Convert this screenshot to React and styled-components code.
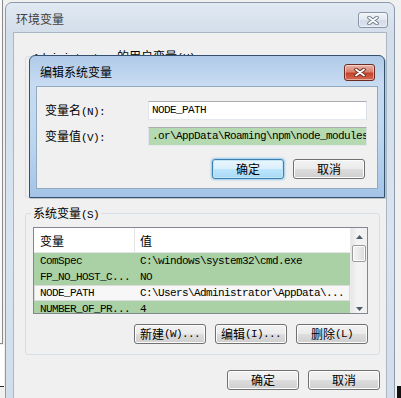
import React from "react"
import styled, { createGlobalStyle } from "styled-components"

const GlobalStyle = createGlobalStyle`
  html, body { margin: 0; padding: 0; }
  body { background: #f0f0f0; overflow: hidden; }
  * { box-sizing: border-box; }
`

const Desktop = styled.div`
  position: relative;
  width: 401px;
  height: 398px;
  overflow: hidden;
  background: #f0f0f0;
  font-family: "Liberation Mono", "DejaVu Sans Mono", monospace;
  font-size: 11px;
  letter-spacing: -0.6px;
  color: #000;
`

// bits of other windows peeking out behind the dialogs
const BackPane = styled.div`
  position: absolute;
  left: -30px;
  top: -10px;
  width: 33px;
  height: 354px;
  background: #fafafa;
  border: 1px solid #8a8a8a;
`

const BackPaneLow = styled.div`
  position: absolute;
  left: -30px;
  top: 345px;
  width: 34px;
  height: 42px;
  background: #fff;
  border-bottom: 1px solid #2a2a2a;
`

const DarkCorner = styled.div`
  position: absolute;
  left: 397px;
  top: 386px;
  width: 4px;
  height: 12px;
  background: #111;
`

const Han = styled.span`
  font-family: "Noto Sans CJK SC", sans-serif;
  font-size: 12px;
  letter-spacing: 0;
`

const OuterWindow = styled.div`
  position: absolute;
  left: 5px;
  top: 2px;
  width: 390px;
  height: 430px;
  border: 1px solid #8c9aab;
  border-radius: 7px 7px 0 0;
  background: linear-gradient(#e1e9f2, #d3deeb 30px, #d9e4f0 55%, #cfdcea);
  padding: 0 7px;
  display: flex;
  flex-direction: column;
`

const EditDialog = styled.div`
  position: absolute;
  left: 29px;
  top: 55px;
  width: 356px;
  height: 143px;
  border: 1px solid #34506f;
  border-radius: 6px 6px 0 0;
  background: linear-gradient(#afcae8, #c7dbf1 28px, #bcd6f0 60%, #a4c4e7);
  padding: 0 6px 8px;
  display: flex;
  flex-direction: column;
  box-shadow: 1px 1px 0 rgba(40, 60, 90, 0.25);
`

const TitleBar = styled.div`
  height: ${p => p.$h}px;
  flex: none;
  display: flex;
  justify-content: space-between;
  align-items: flex-start;
  padding-left: ${p => p.$indent}px;
`

const Caption = styled.div`
  margin-top: 8px;
  font-family: "Noto Sans CJK SC", sans-serif;
  font-size: 12px;
  line-height: 16px;
  letter-spacing: 0;
  color: ${p => (p.$dim ? "#404040" : "#000")};
`

const CloseButton = styled.div`
  width: ${p => p.$w}px;
  height: ${p => p.$hh}px;
  margin-top: ${p => p.$top}px;
  margin-right: ${p => p.$right}px;
  border: 1px solid ${p => (p.$active ? "#6e2b22" : "#8795a6")};
  border-radius: 3px;
  background: ${p =>
    p.$active
      ? "linear-gradient(#eab3a5, #d9826f 45%, #c3432c 55%, #d76a52)"
      : "linear-gradient(#f1f4f8, #e2e8f0 50%, #d3dce7 51%, #dde4ee)"};
  box-shadow: inset 0 0 0 1px rgba(255, 255, 255, 0.45);
  display: flex;
  align-items: center;
  justify-content: center;
`

const CloseGlyph = ({ active }) => (
  <svg width="12" height="9" viewBox="0 0 12 9">
    <path
      d="M2 1.5 L10 7.5 M10 1.5 L2 7.5"
      stroke={active ? "#6a2a20" : "#6d7a8a"}
      strokeWidth="3.6"
      strokeLinecap="round"
    />
    <path
      d="M2 1.5 L10 7.5 M10 1.5 L2 7.5"
      stroke="#fff"
      strokeWidth="1.8"
      strokeLinecap="round"
    />
  </svg>
)

const Client = styled.div`
  flex: 1;
  background: #f0f0f0;
  border: 1px solid ${p => (p.$active ? "#92a9c2" : "#a9b6c4")};
  display: flex;
  flex-direction: column;
`

const Group = styled.fieldset`
  margin: ${p => p.$top}px 6px 0 11px;
  padding: 7px 11px 10px 7px;
  border: 1px solid #d5dfe5;
  border-radius: 3px;
  min-width: 0;
`

const Legend = styled.legend`
  padding: 0 2px;
  margin-left: -2px;
  line-height: 14px;
  height: 14px;
`

// the user list sits under the edit dialog, only its frame shows
const HiddenBody = styled.div`
  height: 117px;
`

const ListView = styled.div`
  display: grid;
  grid-template-columns: 1fr 17px;
  height: 87px;
  border: 1px solid #828790;
  background: #fff;
  overflow: hidden;
`

const ListBody = styled.div`
  min-width: 0;
  display: flex;
  flex-direction: column;
`

const HeaderRow = styled.div`
  display: grid;
  grid-template-columns: 100px 1fr;
  height: 25px;
  flex: none;
  border-bottom: 1px solid #e5e5e5;
`

const HeaderCell = styled.div`
  display: flex;
  align-items: center;
  padding-left: 6px;
  & + & {
    border-left: 1px solid #e5e5e5;
    padding-left: 5px;
  }
`

const Row = styled.div`
  display: grid;
  grid-template-columns: 100px 1fr;
  height: 16px;
  flex: none;
  line-height: 16px;
  white-space: nowrap;
  background: ${p => (p.$selected ? "#f7f7f7" : "#a9d1a5")};
  box-shadow: ${p => (p.$selected ? "inset 0 0 0 1px #dcdcdc" : "none")};
`

const Cell = styled.div`
  padding-left: 6px;
  overflow: hidden;
`

const ScrollBar = styled.div`
  display: flex;
  flex-direction: column;
  background: linear-gradient(to right, #e6e6e6, #f4f4f4 40%, #f0f0f0);
  border-left: 1px solid #ececec;
`

const ScrollArrow = styled.div`
  height: 17px;
  flex: none;
  display: flex;
  align-items: center;
  justify-content: center;
`

const ScrollTrack = styled.div`
  flex: 1;
  padding: 0 1px;
`

const Thumb = styled.div`
  height: 17px;
  border: 1px solid #9b9b9b;
  border-radius: 2px;
  background: linear-gradient(to right, #f4f4f4, #e9e9e9 50%, #d9d9d9);
  box-shadow: inset 0 0 0 1px #fdfdfd;
`

const Arrow = ({ down }) => (
  <svg width="7" height="4" viewBox="0 0 7 4">
    <path d={down ? "M0 0 H7 L3.5 4 Z" : "M0 4 H7 L3.5 0 Z"} fill="#4f5b6b" />
  </svg>
)

const ButtonRow = styled.div`
  display: flex;
  justify-content: flex-end;
  gap: 9px;
  margin-top: ${p => p.$top}px;
  padding-right: ${p => p.$right || 0}px;
`

const Button = styled.div`
  width: 72px;
  height: 20px;
  border: 1px solid ${p => (p.$default ? "#3c7fb1" : "#707070")};
  border-radius: 3px;
  background: ${p =>
    p.$default
      ? "linear-gradient(#eaf6fd, #d9f0fc 49%, #bee6fd 50%, #a7d9f5)"
      : "linear-gradient(#f2f2f2, #ebebeb 49%, #dddddd 50%, #cfcfcf)"};
  box-shadow: inset 0 0 0 1px ${p => (p.$default ? "#c4e5f6" : "#fcfcfc")}
    ${p => (p.$default ? ", 0 0 2px 1px rgba(80, 170, 230, 0.55)" : "")};
  display: flex;
  align-items: center;
  justify-content: center;
  line-height: 16px;
  white-space: nowrap;
`

const Form = styled.div`
  display: grid;
  grid-template-columns: 103px 1fr;
  row-gap: 7px;
  align-items: center;
  padding: 14px 10px 0 8px;
`

const Label = styled.div`
  line-height: 16px;
`

const TextBox = styled.div`
  height: 19px;
  border: 1px solid;
  border-color: #abadb3 #dbdfe6 #e3e9ef #e2e3ea;
  background: ${p => (p.$tint ? "#b5d9b1" : "#fff")};
  padding-left: 3px;
  line-height: 17px;
  white-space: nowrap;
  overflow: hidden;
`

const systemRows = [
  { name: "ComSpec", value: "C:\\windows\\system32\\cmd.exe" },
  { name: "FP_NO_HOST_C...", value: "NO" },
  { name: "NODE_PATH", value: "C:\\Users\\Administrator\\AppData\\...", selected: true },
  { name: "NUMBER_OF_PR...", value: "4" },
]

const VariableList = ({ rows }) => (
  <ListView>
    <ListBody>
      <HeaderRow>
        <HeaderCell><Han>变量</Han></HeaderCell>
        <HeaderCell><Han>值</Han></HeaderCell>
      </HeaderRow>
      {rows.map(r => (
        <Row key={r.name} $selected={r.selected}>
          <Cell>{r.name}</Cell>
          <Cell>{r.value}</Cell>
        </Row>
      ))}
    </ListBody>
    <ScrollBar>
      <ScrollArrow><Arrow /></ScrollArrow>
      <ScrollTrack><Thumb /></ScrollTrack>
      <ScrollArrow><Arrow down /></ScrollArrow>
    </ScrollBar>
  </ListView>
)

export default function App() {
  return (
    <>
      <GlobalStyle />
      <Desktop>
        <BackPane />
        <BackPaneLow />
        <DarkCorner />

        <OuterWindow>
          <TitleBar $h={29} $indent={3}>
            <Caption $dim>环境变量</Caption>
            <CloseButton $w={30} $hh={16} $top={9} $right={-1}>
              <CloseGlyph />
            </CloseButton>
          </TitleBar>
          <Client>
            <Group $top={16}>
              <Legend>Administrator <Han>的用户变量</Han>(U)</Legend>
              <HiddenBody />
            </Group>
            <Group $top={8}>
              <Legend><Han>系统变量</Han>(S)</Legend>
              <VariableList rows={systemRows} />
              <ButtonRow $top={10}>
                <Button><Han>新建</Han>(W)...</Button>
                <Button><Han>编辑</Han>(I)...</Button>
                <Button><Han>删除</Han>(L)</Button>
              </ButtonRow>
            </Group>
            <ButtonRow $top={15} $right={6}>
              <Button><Han>确定</Han></Button>
              <Button><Han>取消</Han></Button>
            </ButtonRow>
          </Client>
        </OuterWindow>

        <EditDialog>
          <TitleBar $h={30} $indent={4}>
            <Caption>编辑系统变量</Caption>
            <CloseButton $active $w={31} $hh={17} $top={8} $right={3}>
              <CloseGlyph active />
            </CloseButton>
          </TitleBar>
          <Client $active>
            <Form>
              <Label><Han>变量名</Han>(N):</Label>
              <TextBox>NODE_PATH</TextBox>
              <Label><Han>变量值</Han>(V):</Label>
              <TextBox $tint>.or\AppData\Roaming\npm\node_modules</TextBox>
            </Form>
            <ButtonRow $top={13} $right={12}>
              <Button $default><Han>确定</Han></Button>
              <Button><Han>取消</Han></Button>
            </ButtonRow>
          </Client>
        </EditDialog>
      </Desktop>
    </>
  )
}
